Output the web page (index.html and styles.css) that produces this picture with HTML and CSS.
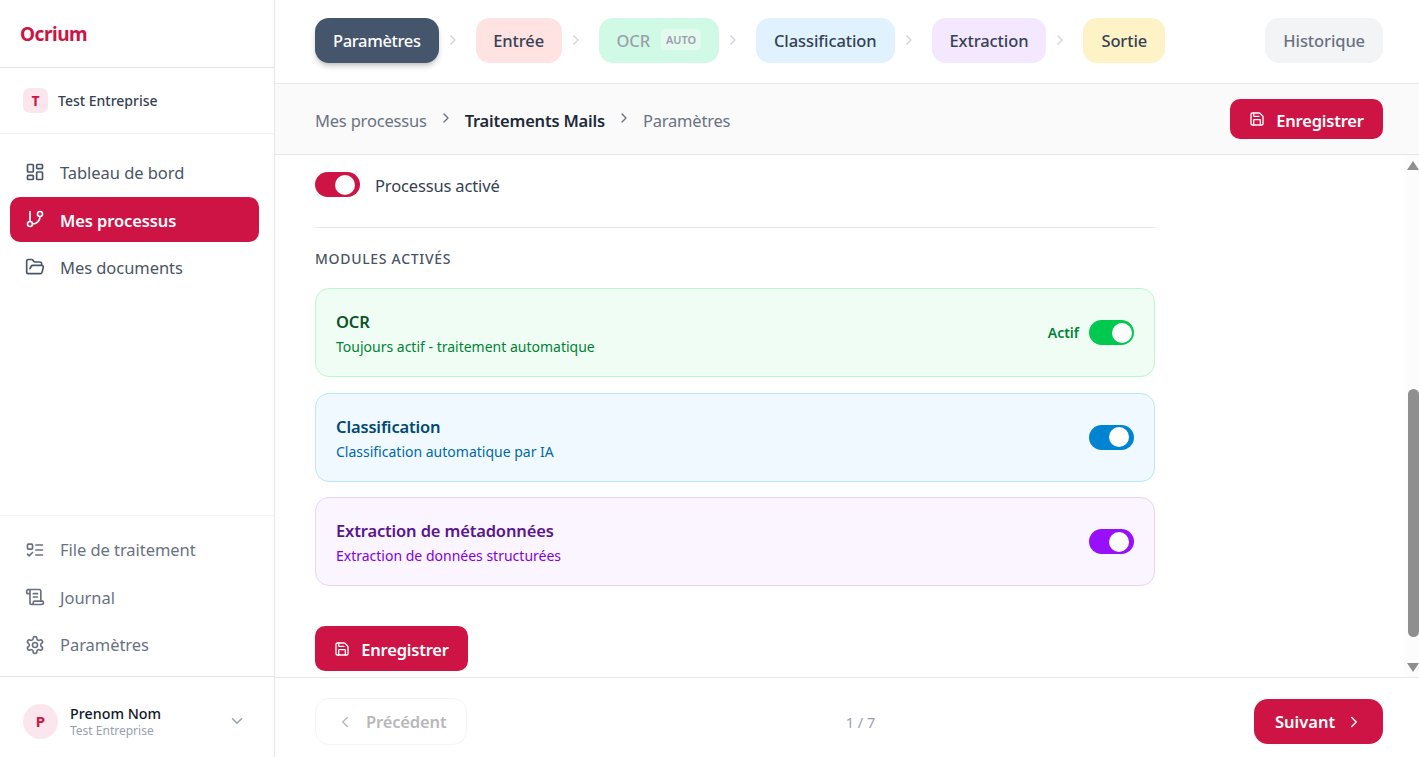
FILE: index.html
```html
<!DOCTYPE html>
<html lang="fr">

<head>
    <meta charset="UTF-8">
    <meta name="viewport" content="width=device-width, initial-scale=1.0">
    <title>Ocrium - Paramètres</title>
    <link rel="stylesheet" href="styles.css">
</head>

<body>
    <!-- Icon sprite -->
    <svg class="sprite" xmlns="http://www.w3.org/2000/svg">
        <symbol id="i-dashboard" viewBox="0 0 24 24"><rect width="7" height="9" x="3" y="3" rx="1"/><rect width="7" height="5" x="14" y="3" rx="1"/><rect width="7" height="9" x="14" y="12" rx="1"/><rect width="7" height="5" x="3" y="16" rx="1"/></symbol>
        <symbol id="i-branch" viewBox="0 0 24 24"><line x1="6" x2="6" y1="3" y2="15"/><circle cx="18" cy="6" r="3"/><circle cx="6" cy="18" r="3"/><path d="M18 9a9 9 0 0 1-9 9"/></symbol>
        <symbol id="i-folder" viewBox="0 0 24 24"><path d="m6 14 1.5-2.9A2 2 0 0 1 9.24 10H20a2 2 0 0 1 1.94 2.5l-1.54 6a2 2 0 0 1-1.95 1.5H4a2 2 0 0 1-2-2V5a2 2 0 0 1 2-2h3.9a2 2 0 0 1 1.69.9l.81 1.2a2 2 0 0 0 1.67.9H18a2 2 0 0 1 2 2v2"/></symbol>
        <symbol id="i-todo" viewBox="0 0 24 24"><rect x="3" y="5" width="6" height="6" rx="1"/><path d="m3 17 2 2 4-4"/><path d="M13 6h8"/><path d="M13 12h8"/><path d="M13 18h8"/></symbol>
        <symbol id="i-scroll" viewBox="0 0 24 24"><path d="M15 12h-5"/><path d="M15 8h-5"/><path d="M19 17V5a2 2 0 0 0-2-2H4"/><path d="M8 21h12a2 2 0 0 0 2-2v-1a1 1 0 0 0-1-1H11a1 1 0 0 0-1 1v1a2 2 0 1 1-4 0V5a2 2 0 1 0-4 0v2a1 1 0 0 0 1 1h3"/></symbol>
        <symbol id="i-settings" viewBox="0 0 24 24"><path d="M12.22 2h-.44a2 2 0 0 0-2 2v.18a2 2 0 0 1-1 1.73l-.43.25a2 2 0 0 1-2 0l-.15-.08a2 2 0 0 0-2.73.73l-.22.38a2 2 0 0 0 .73 2.73l.15.1a2 2 0 0 1 1 1.72v.51a2 2 0 0 1-1 1.74l-.15.09a2 2 0 0 0-.73 2.73l.22.38a2 2 0 0 0 2.73.73l.15-.08a2 2 0 0 1 2 0l.43.25a2 2 0 0 1 1 1.73V20a2 2 0 0 0 2 2h.44a2 2 0 0 0 2-2v-.18a2 2 0 0 1 1-1.73l.43-.25a2 2 0 0 1 2 0l.15.08a2 2 0 0 0 2.73-.73l.22-.39a2 2 0 0 0-.73-2.73l-.15-.08a2 2 0 0 1-1-1.74v-.5a2 2 0 0 1 1-1.74l.15-.09a2 2 0 0 0 .73-2.73l-.22-.38a2 2 0 0 0-2.73-.73l-.15.08a2 2 0 0 1-2 0l-.43-.25a2 2 0 0 1-1-1.73V4a2 2 0 0 0-2-2z"/><circle cx="12" cy="12" r="3"/></symbol>
        <symbol id="i-save" viewBox="0 0 24 24"><path d="M15.2 3a2 2 0 0 1 1.4.6l3.8 3.8a2 2 0 0 1 .6 1.4V19a2 2 0 0 1-2 2H5a2 2 0 0 1-2-2V5a2 2 0 0 1 2-2z"/><path d="M17 21v-7a1 1 0 0 0-1-1H8a1 1 0 0 0-1 1v7"/><path d="M7 3v4a1 1 0 0 0 1 1h7"/></symbol>
        <symbol id="i-right" viewBox="0 0 24 24"><path d="m9 18 6-6-6-6"/></symbol>
        <symbol id="i-left" viewBox="0 0 24 24"><path d="m15 18-6-6 6-6"/></symbol>
        <symbol id="i-down" viewBox="0 0 24 24"><path d="m6 9 6 6 6-6"/></symbol>
    </svg>

    <div class="app">
        <aside class="sidebar">
            <div class="logo">Ocrium</div>

            <div class="company">
                <span class="company-badge">T</span>
                <span class="company-name">Test Entreprise</span>
            </div>

            <nav class="nav nav-main">
                <a class="nav-item"><svg class="icon"><use href="#i-dashboard"/></svg>Tableau de bord</a>
                <a class="nav-item active"><svg class="icon"><use href="#i-branch"/></svg>Mes processus</a>
                <a class="nav-item"><svg class="icon"><use href="#i-folder"/></svg>Mes documents</a>
            </nav>

            <nav class="nav nav-bottom">
                <a class="nav-item"><svg class="icon"><use href="#i-todo"/></svg>File de traitement</a>
                <a class="nav-item"><svg class="icon"><use href="#i-scroll"/></svg>Journal</a>
                <a class="nav-item"><svg class="icon"><use href="#i-settings"/></svg>Paramètres</a>
            </nav>

            <div class="profile">
                <span class="avatar">P</span>
                <div class="profile-text">
                    <div class="profile-name">Prenom Nom</div>
                    <div class="profile-company">Test Entreprise</div>
                </div>
                <svg class="icon profile-chevron"><use href="#i-down"/></svg>
            </div>
        </aside>

        <main class="main">
            <header class="steps">
                <button class="step step-settings">Paramètres</button>
                <svg class="step-sep"><use href="#i-right"/></svg>
                <button class="step step-input">Entrée</button>
                <svg class="step-sep"><use href="#i-right"/></svg>
                <button class="step step-ocr"><span class="step-dim">OCR</span><span class="auto-tag">AUTO</span></button>
                <svg class="step-sep"><use href="#i-right"/></svg>
                <button class="step step-class">Classification</button>
                <svg class="step-sep"><use href="#i-right"/></svg>
                <button class="step step-extract">Extraction</button>
                <svg class="step-sep"><use href="#i-right"/></svg>
                <button class="step step-output">Sortie</button>
                <button class="step step-history">Historique</button>
            </header>

            <div class="crumbs">
                <span class="crumb">Mes processus</span>
                <svg class="crumb-sep"><use href="#i-right"/></svg>
                <span class="crumb crumb-current">Traitements Mails</span>
                <svg class="crumb-sep"><use href="#i-right"/></svg>
                <span class="crumb">Paramètres</span>
                <button class="btn btn-top"><svg class="btn-icon"><use href="#i-save"/></svg>Enregistrer</button>
            </div>

            <section class="content">
                <div class="form">
                    <label class="process-row">
                        <span class="toggle toggle-crimson"></span>
                        <span class="process-label">Processus activé</span>
                    </label>

                    <h2 class="modules-title">Modules activés</h2>

                    <div class="module module-green">
                        <div>
                            <div class="module-name">OCR</div>
                            <div class="module-desc">Toujours actif - traitement automatique</div>
                        </div>
                        <div class="module-side">
                            <span class="module-state">Actif</span>
                            <span class="toggle toggle-green"></span>
                        </div>
                    </div>

                    <div class="module module-blue">
                        <div>
                            <div class="module-name">Classification</div>
                            <div class="module-desc">Classification automatique par IA</div>
                        </div>
                        <span class="toggle toggle-blue"></span>
                    </div>

                    <div class="module module-purple">
                        <div>
                            <div class="module-name">Extraction de métadonnées</div>
                            <div class="module-desc">Extraction de données structurées</div>
                        </div>
                        <span class="toggle toggle-purple"></span>
                    </div>

                    <button class="btn btn-bottom"><svg class="btn-icon"><use href="#i-save"/></svg>Enregistrer</button>
                </div>

                <!-- Scrollbar drawn over the content -->
                <div class="scrollbar">
                    <span class="arrow arrow-up"></span>
                    <span class="thumb"></span>
                    <span class="arrow arrow-down"></span>
                </div>
            </section>

            <footer class="pager">
                <button class="pager-prev"><svg class="pager-icon"><use href="#i-left"/></svg>Précédent</button>
                <span class="pager-count">1 / 7</span>
                <button class="pager-next">Suivant<svg class="pager-icon"><use href="#i-right"/></svg></button>
            </footer>
        </main>
    </div>
</body>

</html>
```

FILE: styles.css
```css
/* General */
* {
    box-sizing: border-box;
}

html,
body {
    height: 100%;
}

body {
    margin: 0;
    font-family: 'Noto Sans', 'Open Sans', sans-serif;
    color: #364153;
    background: #fff;
    overflow: hidden;
}

button {
    font-family: inherit;
    border: none;
    cursor: pointer;
}

.sprite {
    display: none;
}

.icon,
.btn-icon,
.pager-icon,
.step-sep,
.crumb-sep {
    fill: none;
    stroke: currentColor;
    stroke-width: 2;
    stroke-linecap: round;
    stroke-linejoin: round;
    flex-shrink: 0;
}

.app {
    display: flex;
    height: 757px;
}

/* Sidebar */
.sidebar {
    width: 275px;
    flex-shrink: 0;
    display: flex;
    flex-direction: column;
    border-right: 1px solid #e5e7eb;
}

.logo {
    height: 68px;
    padding: 21px 20px 0;
    border-bottom: 1px solid #e5e7eb;
    color: #cd1444;
    font-size: 19px;
    line-height: 26px;
    font-weight: 700;
    letter-spacing: -0.45px;
}

.company {
    height: 66px;
    padding: 0 23px;
    display: flex;
    align-items: center;
    gap: 10px;
    border-bottom: 1px solid #f3f4f6;
}

.company-badge {
    width: 25px;
    height: 25px;
    border-radius: 7px;
    background: #fae6ec;
    color: #cd1444;
    font-size: 14px;
    font-weight: 700;
    display: flex;
    align-items: center;
    justify-content: center;
}

.company-name {
    font-size: 14px;
    font-weight: 500;
}

.nav {
    display: flex;
    flex-direction: column;
    gap: 2.5px;
    padding: 0 15px 0 10px;
}

.nav-main {
    flex: 1;
    padding-top: 15.5px;
}

.nav-bottom {
    padding-top: 11px;
    padding-bottom: 9px;
    border-top: 1px solid #f3f4f6;
}

.nav-item {
    height: 45px;
    padding: 0 15px;
    display: flex;
    align-items: center;
    gap: 15px;
    border-radius: 10px;
    color: #4a5565;
    font-size: 16.5px;
    letter-spacing: -0.05px;
}

.nav-item .icon {
    width: 20px;
    height: 20px;
}

.nav-bottom .nav-item {
    color: #6a7282;
}

.nav-item.active {
    padding-top: 1px;
    background: #cd1444;
    color: #fff;
    font-weight: 600;
    letter-spacing: -0.1px;
}

.nav-item.active .icon {
    margin-bottom: 3px;
}

.profile {
    height: 81px;
    padding: 8px 28px 0 23px;
    display: flex;
    align-items: center;
    gap: 12px;
    border-top: 1px solid #e5e7eb;
}

.avatar {
    width: 35px;
    height: 35px;
    border-radius: 50%;
    background: #fae6ec;
    color: #cd1444;
    font-size: 15px;
    font-weight: 700;
    display: flex;
    align-items: center;
    justify-content: center;
}

.profile-text {
    flex: 1;
}

.profile-name {
    font-size: 14.3px;
    line-height: 19px;
    font-weight: 500;
    color: #101828;
}

.profile-company {
    font-size: 12px;
    line-height: 16px;
    color: #99a1af;
}

.profile-chevron {
    width: 18px;
    height: 18px;
    color: #99a1af;
}

/* Main column */
.main {
    flex: 1;
    min-width: 0;
    display: flex;
    flex-direction: column;
}

.steps {
    height: 84px;
    padding: 0 36px 3px 40px;
    display: flex;
    align-items: center;
    border-bottom: 1px solid #e5e7eb;
}

.step {
    height: 45px;
    padding: 1px 18px 0;
    border-radius: 14px;
    font-size: 16.5px;
    font-weight: 500;
    letter-spacing: -0.1px;
    color: #364153;
    display: flex;
    align-items: center;
}

.step-sep {
    width: 16px;
    height: 16px;
    margin: 0 15px 0 6px;
    color: #d1d5dc;
}

.step-settings {
    background: #45556c;
    color: #fff;
    letter-spacing: -0.35px;
    box-shadow: 0 4px 6px -1px rgba(0, 0, 0, 0.2), 0 2px 4px -2px rgba(0, 0, 0, 0.15);
}

.step-input {
    padding: 1px 17.5px 0;
    background: #ffe2e2;
}

.step-ocr {
    background: #d0fae5;
    gap: 11px;
}

.step-dim {
    color: #9b9fa9;
}

.auto-tag {
    height: 21px;
    padding: 0 5px;
    margin-bottom: 3px;
    border-radius: 5px;
    background: #e3fbef;
    color: #9b9fa9;
    font-size: 11px;
    font-weight: 600;
    line-height: 21px;
}

.step-class {
    background: #dff2fe;
}

.step-extract {
    background: #f3e8ff;
}

.step-output {
    background: #fef3c6;
}

.step-history {
    margin-left: auto;
    background: #f3f4f6;
    color: #6a7282;
}

/* Breadcrumb */
.crumbs {
    height: 71px;
    padding: 0 36px 0 40px;
    display: flex;
    align-items: center;
    gap: 11px;
    background: #fafafa;
    border-bottom: 1px solid #e5e7eb;
}

.crumb {
    padding-top: 2px;
    font-size: 16.5px;
    letter-spacing: -0.2px;
    color: #6a7282;
}

.crumb-current {
    color: #1e2939;
    font-weight: 600;
}

.crumb-sep {
    width: 16px;
    height: 16px;
    margin-bottom: 2px;
    color: #6a7282;
}

.btn {
    display: flex;
    align-items: center;
    justify-content: center;
    gap: 11px;
    padding: 2px 0 0;
    border-radius: 10px;
    background: #cd1444;
    color: #fff;
    font-size: 16.5px;
    font-weight: 600;
    letter-spacing: -0.2px;
}

.btn-icon {
    width: 16px;
    height: 16px;
    margin-bottom: 2px;
}

.btn-top {
    width: 153px;
    height: 40px;
    margin-left: auto;
}

/* Content */
.content {
    position: relative;
    flex: 1;
    min-height: 0;
    padding: 0 40px;
    overflow: hidden;
}

.form {
    width: 840px;
    padding-top: 17px;
}

.process-row {
    display: flex;
    align-items: center;
    gap: 15px;
    padding-bottom: 30px;
    border-bottom: 1px solid #e5e7eb;
    font-size: 16.5px;
    letter-spacing: -0.15px;
}

.process-label {
    padding-top: 2px;
}

.toggle {
    position: relative;
    display: block;
    width: 45px;
    height: 25px;
    border-radius: 13px;
    flex-shrink: 0;
}

/* toggle knob */
.toggle::after {
    content: "";
    position: absolute;
    top: 2.5px;
    right: 5px;
    width: 20px;
    height: 20px;
    border-radius: 50%;
    background: #fff;
}

.toggle-crimson {
    background: #cd1444;
}

.toggle-green {
    background: #00c950;
}

.toggle-green::after {
    right: 2px;
}

.toggle-blue {
    background: #0084d1;
}

.toggle-purple {
    background: #9810fa;
}

.modules-title {
    margin: 21px 0 19px;
    font-size: 14px;
    line-height: 20px;
    font-weight: 500;
    letter-spacing: 0.7px;
    color: #4a5565;
    text-transform: uppercase;
}

.module {
    height: 89px;
    margin-bottom: 15.5px;
    padding: 0 20px;
    display: flex;
    align-items: center;
    justify-content: space-between;
    border: 1px solid;
    border-radius: 14px;
}

.module-name {
    padding-top: 2px;
    font-size: 16.5px;
    line-height: 25px;
    font-weight: 600;
    letter-spacing: -0.15px;
}

.module-desc {
    padding-top: 2px;
    font-size: 14px;
    line-height: 22px;
}

.module-side {
    display: flex;
    align-items: center;
    gap: 10px;
}

.module-state {
    font-size: 14px;
    font-weight: 600;
    color: #008236;
}

.module-green {
    background: #f0fdf4;
    border-color: #b9f8cf;
}

.module-green .module-name {
    color: #0d542b;
}

.module-green .module-desc {
    color: #008236;
}

.module-blue {
    background: #f0f9ff;
    border-color: #b8e6fe;
}

.module-blue .module-name {
    color: #024a70;
}

.module-blue .module-desc {
    color: #0069a8;
}

.module-purple {
    background: #faf5ff;
    border-color: #e9d4ff;
}

.module-purple .module-name {
    color: #59168b;
}

.module-purple .module-desc {
    color: #8200db;
}

.btn-bottom {
    width: 153px;
    height: 45px;
    margin-top: 40px;
}

/* Scrollbar */
.scrollbar {
    position: absolute;
    top: 0;
    right: 0;
    bottom: 0;
    width: 15px;
    background: #fcfcfc;
}

.thumb {
    position: absolute;
    top: 234px;
    right: 0;
    width: 11px;
    height: 248px;
    border-radius: 6px;
    background: #8f8f8f;
}

.arrow {
    position: absolute;
    right: 0;
    width: 0;
    height: 0;
    border-left: 6px solid transparent;
    border-right: 6px solid transparent;
}

.arrow-up {
    top: 6px;
    border-bottom: 9px solid #8f8f8f;
}

.arrow-down {
    bottom: 5px;
    border-top: 9px solid #8f8f8f;
}

/* Footer pager */
.pager {
    height: 80px;
    padding: 8px 36px 0 40px;
    display: flex;
    align-items: center;
    justify-content: space-between;
    border-top: 1px solid #e5e7eb;
}

.pager-prev,
.pager-next {
    display: flex;
    align-items: center;
    border-radius: 14px;
    font-size: 16.5px;
    font-weight: 600;
}

.pager-prev {
    width: 152px;
    height: 47px;
    padding: 0 20px;
    gap: 12px;
    background: #fff;
    border: 1px solid #f3f4f6;
    color: #b8b8b8;
    letter-spacing: -0.15px;
}

.pager-next {
    width: 129px;
    height: 45px;
    padding: 0 21px;
    gap: 10px;
    background: #cd1444;
    color: #fff;
}

.pager-icon {
    width: 18px;
    height: 18px;
}

.pager-count {
    font-size: 14.5px;
    color: #99a1af;
}
```
